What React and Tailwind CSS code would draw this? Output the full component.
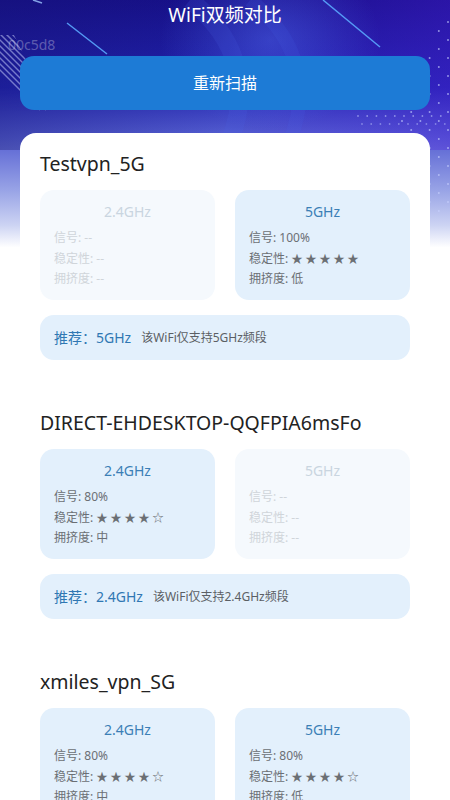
import React from "react";

const networks = [
  {
    ssid: "Testvpn_5G",
    g24: null,
    g5: { signal: "100%", stars: "★★★★★", crowd: "低" },
    rec: "5GHz",
    note: "该WiFi仅支持5GHz频段",
  },
  {
    ssid: "DIRECT-EHDESKTOP-QQFPIA6msFo",
    g24: { signal: "80%", stars: "★★★★☆", crowd: "中" },
    g5: null,
    rec: "2.4GHz",
    note: "该WiFi仅支持2.4GHz频段",
  },
  {
    ssid: "xmiles_vpn_SG",
    g24: { signal: "80%", stars: "★★★★☆", crowd: "中" },
    g5: { signal: "80%", stars: "★★★★☆", crowd: "低" },
    rec: "5GHz",
    note: "5GHz信号更稳定，推荐使用",
  },
];

// decorative header artwork (stripes, dots, light streaks)
function HeaderArt() {
  const dots = [];
  for (let r = 0; r < 22; r++) {
    for (let c = 0; c < 6; c++) {
      const x = 448 - c * 9.2;
      const y = 22 + r * 9;
      if (c > 1 + r * 0.4) continue;
      if ((r + c) % 2 === 1) continue;
      dots.push(<circle key={r + "-" + c} cx={x} cy={y} r="1" fill="#c9d3ff" opacity="0.65" />);
    }
  }
  const rowDots = [];
  for (let c = 0; c < 10; c++) {
    rowDots.push(<circle key={"a" + c} cx={358 + c * 9.2} cy={116} r="0.9" fill="#c9d3ff" opacity="0.55" />);
    rowDots.push(<circle key={"b" + c} cx={362 + c * 9.2} cy={124} r="0.9" fill="#c9d3ff" opacity="0.45" />);
  }
  const stripes = [];
  for (let i = 0; i < 14; i++) {
    stripes.push(
      <line key={i} x1={-40 + i * 6} y1={30} x2={40 + i * 6} y2={110} stroke="#cfd8ff" strokeWidth="1.5" opacity="0.5" />
    );
  }
  return (
    <svg className="absolute inset-0 w-full h-full" viewBox="0 0 450 250" preserveAspectRatio="none">
      <defs>
        <clipPath id="stripeClip">
          <polygon points="0,35 14,35 60,130 60,150 0,150" />
        </clipPath>
        <radialGradient id="glow" cx="0.5" cy="0.5" r="0.5">
          <stop offset="0" stopColor="#5a7bff" stopOpacity="0.4" />
          <stop offset="1" stopColor="#5a7bff" stopOpacity="0" />
        </radialGradient>
      </defs>
      <ellipse cx="270" cy="40" rx="110" ry="90" fill="url(#glow)" />
      <path d="M190 0 C 240 40, 250 90, 230 140" stroke="#4a63e8" strokeWidth="18" fill="none" opacity="0.16" />
      <path d="M250 0 C 300 40, 310 90, 290 140" stroke="#4a63e8" strokeWidth="14" fill="none" opacity="0.14" />
      <g clipPath="url(#stripeClip)">{stripes}</g>
      <line x1="67" y1="23" x2="107" y2="54" stroke="#5aa8ff" strokeWidth="1.5" opacity="0.9" />
      <line x1="323" y1="0" x2="380" y2="47" stroke="#5aa8ff" strokeWidth="1.5" opacity="0.9" />
      <line x1="33" y1="0" x2="42" y2="3" stroke="#9fc6ff" strokeWidth="1.5" opacity="0.8" />
      {dots}
      {rowDots}
    </svg>
  );
}

function BandBox({ label, data }) {
  if (!data) {
    return (
      <div className="h-[110px] rounded-[14px] bg-[#f5f9fd] px-[14px] pt-3">
        <div className="h-5 leading-5 text-center text-[14px] text-[#c9d5e0]">{label}</div>
        <div className="mt-1.5 text-[12px] leading-[20.5px] text-[#d0d5da]">
          <div>信号: --</div>
          <div>稳定性: --</div>
          <div>拥挤度: --</div>
        </div>
      </div>
    );
  }
  return (
    <div className="h-[110px] rounded-[14px] bg-[#e3f0fc] px-[14px] pt-3">
      <div className="h-5 leading-5 text-center text-[14px] text-[#3b7fb6]">{label}</div>
      <div className="mt-1.5 text-[12px] leading-[20.5px] text-[#6b6f74]">
        <div>信号: {data.signal}</div>
        <div>
          稳定性: <span className="text-[11.5px] tracking-[2.5px]">{data.stars}</span>
        </div>
        <div>拥挤度: {data.crowd}</div>
      </div>
    </div>
  );
}

function NetworkCard({ net }) {
  return (
    <div className="rounded-2xl bg-white p-5">
      <div className="h-[22px] leading-[22px] text-[19.5px] text-[#222]">{net.ssid}</div>
      <div className="mt-[15px] grid grid-cols-2 gap-5">
        <BandBox label="2.4GHz" data={net.g24} />
        <BandBox label="5GHz" data={net.g5} />
      </div>
      <div className="mt-[15px] h-[45px] rounded-[14px] bg-[#e3f0fc] px-[14px] flex items-center">
        <span className="text-[14px] text-[#2f77b3]">推荐：{net.rec}</span>
        <span className="ml-[10px] text-[12px] text-[#5b5f64]">{net.note}</span>
      </div>
    </div>
  );
}

export default function App() {
  return (
    <div
      className="relative min-h-screen bg-white overflow-hidden"
      style={{ fontFamily: '"Noto Sans", "Noto Sans CJK SC", sans-serif' }}
    >
      <div className="absolute top-0 left-0 right-0 h-[250px] bg-[linear-gradient(180deg,#17108a_0%,#2224b0_35%,#5660d2_55%,#98a3e6_76%,#ccd3f3_90%,#ffffff_99%)]">
        <div className="absolute top-0 left-0 right-0 h-[150px] bg-[linear-gradient(90deg,rgba(20,20,110,0.35)_0%,rgba(40,30,180,0)_50%,rgba(80,30,220,0.35)_100%)]" />
        <HeaderArt />
      </div>

      <div className="relative">
        <div className="pt-1 h-[27px] leading-[23px] text-center text-[19px] text-white">WiFi双频对比</div>
        <div className="mt-[9px] h-[18px] leading-[18px] pl-2 text-[14px] text-white/30">00c5d8</div>
        <div className="px-5 mt-[2px]">
          <button className="w-full h-[54px] rounded-[14px] bg-[#1d7bd6] text-white text-[16px]">
            重新扫描
          </button>
        </div>
        <div className="px-5 mt-[23px] flex flex-col gap-3 pb-6">
          {networks.map((n) => (
            <NetworkCard key={n.ssid} net={n} />
          ))}
        </div>
      </div>
    </div>
  );
}
